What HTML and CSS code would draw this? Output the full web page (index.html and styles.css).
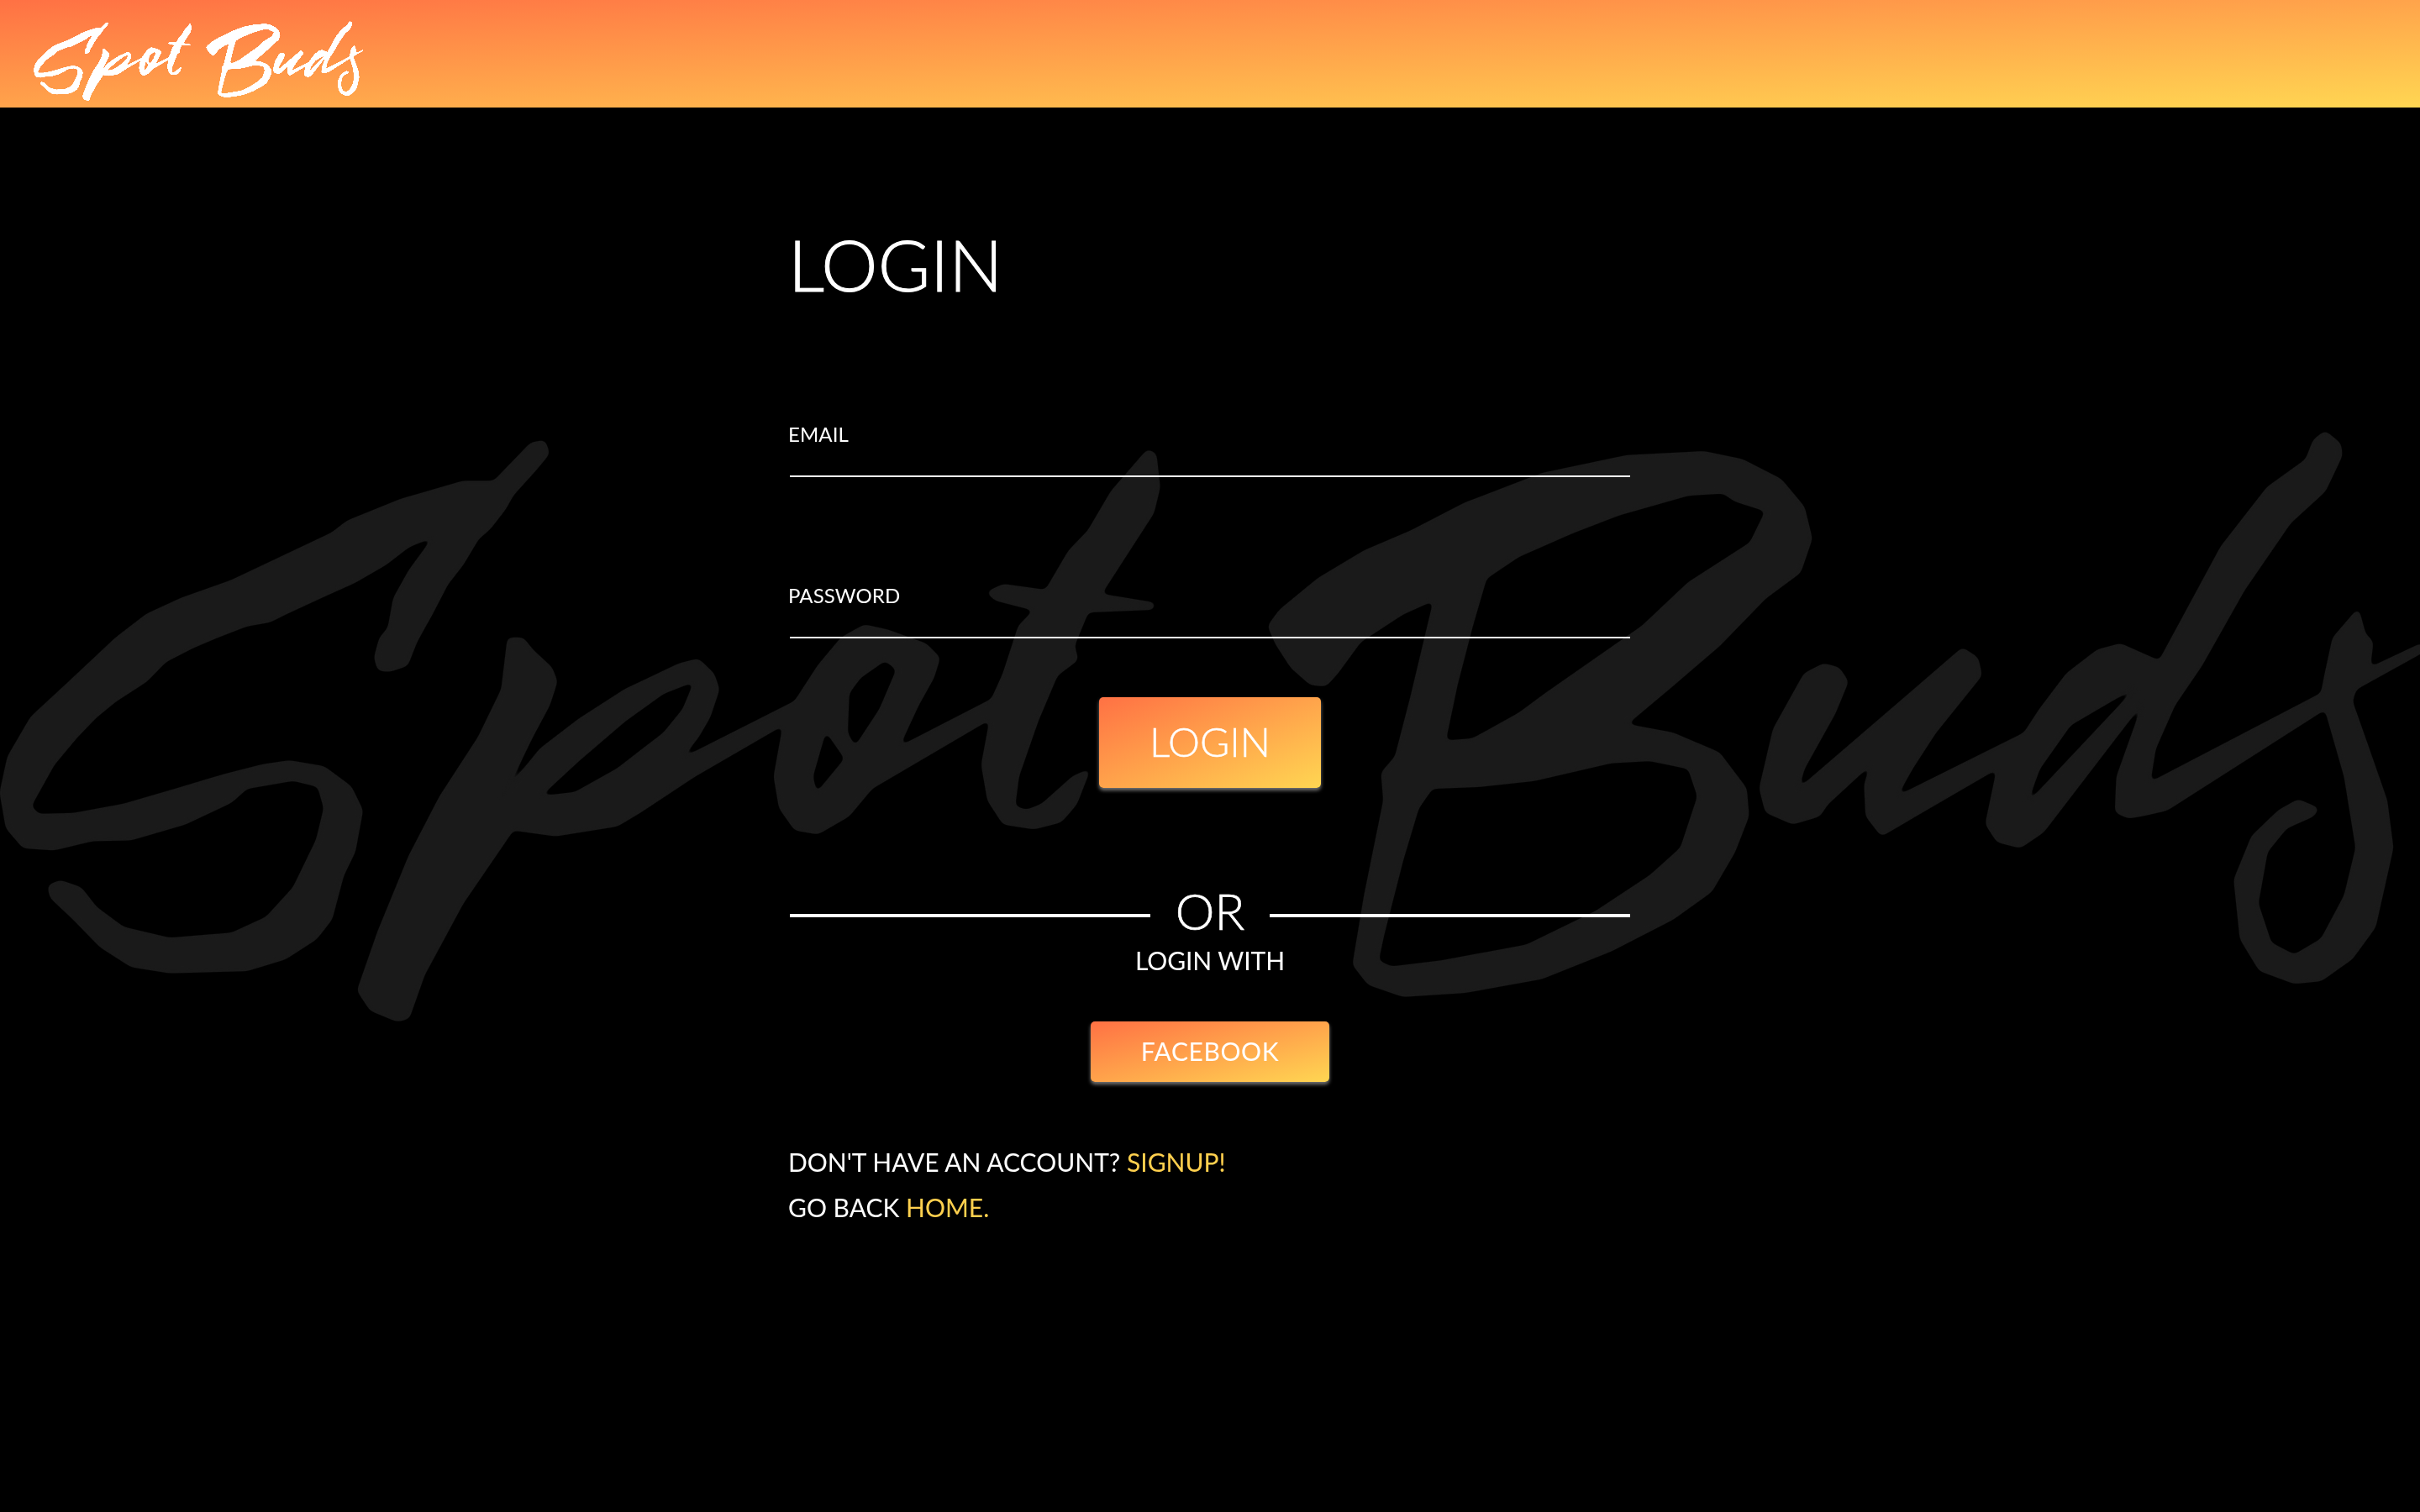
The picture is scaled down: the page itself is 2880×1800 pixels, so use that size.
FILE: index.html
```html
<!DOCTYPE html>
<html lang="en">
<head>
<meta charset="utf-8">
<title>Spot Buds - Login</title>
<link rel="stylesheet" href="styles.css">
</head>
<body>
<svg class="defs" width="0" height="0" aria-hidden="true">
  <defs>
    <filter id="smooth" x="-2%" y="-2%" width="104%" height="104%" color-interpolation-filters="sRGB">
      <feGaussianBlur stdDeviation="4 8"/>
      <feComponentTransfer><feFuncA type="linear" slope="8" intercept="-3"/></feComponentTransfer>
    </filter>
    <symbol id="logo" viewBox="0 28 3136 1490" preserveAspectRatio="none">
      <g filter="url(#smooth)" fill="currentColor" fill-rule="evenodd">
        <path d="M688 58L706 52L712 85L695 125L665 190L655 225L635 275L620 300L600 365L580 415L560 490L540 560L528 620L505 635L490 632L485 600L492 550L503 525L510 450L530 380L562 295L530 320L500 365L460 410L420 445L370 490L350 510L320 520L280 550L250 575L215 610L190 660L150 710L125 750L100 800L70 870L40 975L50 995L95 993L160 970L230 930L290 895L340 870L375 860L420 875L455 925L470 985L460 1090L445 1150L430 1260L410 1310L370 1360L320 1390L220 1395L170 1380L130 1330L95 1260L65 1205L62 1175L78 1162L105 1180L125 1230L160 1280L220 1308L300 1295L345 1255L380 1180L410 1060L420 980L412 925L380 910L320 930L300 965L240 1020L170 1060L120 1062L70 1085L30 1080L8 1030L0 940L10 850L40 750L90 660L150 550L190 490L235 450L300 405L430 285L450 255L520 200L600 155L640 155Z"/>
        <path d="M658 550L678 550L690 580L715 625L722 660L712 720L690 800L670 880L648 955L700 830L750 755L810 680L880 615L905 603L925 640L932 680L920 750L905 800L883 855L1030 710L1060 620L1090 550L1120 517L1150 530L1200 565L1218 600L1210 650L1190 720L1165 825L1285 705L1300 640L1320 520L1340 480L1290 455L1278 435L1300 415L1355 430L1385 330L1410 280L1440 180L1487 75L1498 85L1503 170L1495 235L1460 340L1427 440L1497 462L1495 478L1410 485L1392 570L1397 605L1370 645L1345 760L1320 900L1315 975L1330 985L1350 970L1390 900L1413 880L1395 970L1375 1015L1340 1032L1300 1020L1280 960L1272 870L1283 755L1130 930L1100 1000L1060 1045L1030 1035L1010 980L1003 900L1015 770L900 900L830 990L800 1025L720 1050L665 1035L600 1220L550 1400L530 1510L515 1518L480 1490L463 1440L490 1290L530 1100L570 950L620 800L650 680ZM900 660L860 690L810 760L750 860L700 950L745 940L800 880L860 790L885 730ZM1147 607L1162 630L1140 730L1108 825L1098 790L1100 690L1115 650ZM1070 785L1095 855L1058 942L1053 900Z"/>
        <g transform="translate(1568 0)">
          <path d="M75 520L90 480L140 400L200 330L260 280L330 210L430 135L540 90L640 80L690 100L740 150L770 220L780 300L765 385L720 450L660 570L600 670L540 768L600 790L660 840L695 930L698 1000L680 1090L650 1190L600 1260L520 1340L430 1410L330 1445L250 1455L205 1425L185 1375L200 1200L225 960L222 890L240 850L260 700L290 455L250 490L195 560L165 640L150 672L130 668L105 625L85 565ZM358 400L340 520L320 670L305 810L340 805L400 740L435 690L560 520L620 410L700 310L720 230L680 205L665 185L620 190L530 240L470 285L400 345ZM288 930L350 925L420 910L520 865L570 860L620 880L632 950L610 1080L570 1150L500 1240L410 1325L300 1365L235 1380L218 1365L225 1300L250 1110L270 980Z"/>
          <path d="M795 615L815 625L827 660L810 740L770 880L762 932L975 575L995 600L1000 645L940 790L910 880L890 950L1055 790L1075 730L1110 640L1150 580L1180 565L1230 608L1260 500L1310 320L1370 170L1420 100L1430 50L1445 28L1465 60L1467 90L1445 180L1400 260L1340 430L1285 620L1250 720L1225 830L1218 915L1440 690L1445 640L1455 550L1488 475L1497 540L1507 560L1503 625L1572 562L1572 586L1485 680L1480 710L1500 820L1525 960L1533 1080L1510 1280L1480 1360L1440 1415L1405 1422L1360 1390L1335 1310L1327 1160L1350 1050L1385 985L1410 958L1437 980L1430 1000L1395 1030L1370 1090L1358 1220L1375 1320L1405 1350L1440 1310L1470 1200L1485 1080L1470 900L1445 730L1240 985L1210 998L1190 1005L1173 990L1175 900L1210 710L1080 1040L1050 1080L1020 1065L1005 1020L1020 880L870 1050L850 1000L848 920L857 868L800 970L790 1000L755 1020L720 990L712 930L730 780L770 640ZM1203 670L1115 770L1075 880L1058 970Z"/>
        </g>
      </g>
    </symbol>
  </defs>
</svg>

<header class="topbar">
  <svg class="brand" role="img" aria-label="Spot Buds"><use href="#logo"/></svg>
</header>

<svg class="watermark" aria-hidden="true"><use href="#logo"/></svg>

<main class="panel">
  <h1 class="title">LOGIN</h1>
  <form class="form">
    <label class="field">
      <span class="field-label">EMAIL</span>
      <input class="field-input" type="email">
    </label>
    <label class="field">
      <span class="field-label">PASSWORD</span>
      <input class="field-input" type="password">
    </label>
    <button class="btn btn-login" type="button">LOGIN</button>
  </form>
  <div class="divider"><span class="divider-text">OR</span></div>
  <p class="login-with">LOGIN WITH</p>
  <button class="btn btn-facebook" type="button">FACEBOOK</button>
  <div class="links">
    <p class="link-row">DON'T HAVE AN ACCOUNT? <a class="link" href="#">SIGNUP!</a></p>
    <p class="link-row">GO BACK <a class="link" href="#">HOME.</a></p>
  </div>
</main>
</body>
</html>
```

FILE: styles.css
```css
* { box-sizing: border-box; }
html, body { margin: 0; height: 100%; }
body {
  position: relative;
  height: 1800px;
  overflow: hidden;
  background: #000;
  color: #fff;
  font-family: "Lato", "Open Sans", sans-serif;
}
.defs { position: absolute; }
.topbar {
  height: 128px;
  padding: 25px 0 0 40px;
  background: linear-gradient(to bottom right, #ff7144, #ffd652);
}
.brand { display: block; width: 392px; height: 95px; color: #fff; }
.watermark {
  position: absolute;
  left: 0;
  top: 513px;
  width: 2880px;
  height: 703px;
  color: #1a1a1a;
}
.panel {
  position: relative;
  width: 1000px;
  margin: 0 auto;
  display: flex;
  flex-direction: column;
}
.title {
  margin: 136px 0 0 -2px;
  font-size: 85px;
  line-height: 100px;
  font-weight: 300;
  -webkit-text-stroke: 1px #fff;
}
.form { display: flex; flex-direction: column; align-items: center; }
.field { display: block; width: 100%; height: 88px; margin-top: 116px; padding-top: 22px; }
.field + .field { margin-top: 104px; }
.field-label { display: block; margin-left: -2px; font-size: 24px; line-height: 30px; letter-spacing: .1px; }
.field-input {
  display: block;
  width: 100%;
  height: 36px;
  padding: 0;
  background: transparent;
  border: 0;
  border-bottom: 2px solid #fff;
  outline: 0;
}
.btn {
  border: 0;
  border-radius: 5px;
  color: #fff;
  background: linear-gradient(to bottom right, #ff7144, #ffd652);
  box-shadow: 0 3px 4px rgba(255, 255, 255, .45);
  font-family: inherit;
  padding: 0;
}
.btn-login { width: 264px; height: 108px; margin-top: 70px; padding-bottom: 3px; font-size: 48px; font-weight: 300; -webkit-text-stroke: .5px #fff; }
.divider {
  display: flex;
  align-items: center;
  gap: 30px;
  margin-top: 118px;
  height: 68px;
}
.divider::before, .divider::after { content: ""; flex: 1; height: 4px; background: #fff; }
.divider-text { margin-bottom: 10px; font-size: 59px; line-height: 68px; font-weight: 300; -webkit-text-stroke: .6px #fff; }
.login-with { margin: -1px 0 0; text-align: center; font-size: 30px; line-height: 40px; letter-spacing: -.1px; }
.btn-facebook { align-self: center; width: 284px; height: 72px; margin-top: 53px; padding-bottom: 2px; font-size: 30px; letter-spacing: .6px; }
.links { margin: 68px 0 0 -2px; }
.link-row { margin: 0; font-size: 30px; line-height: 54px; }
.link { color: #ffd04e; text-decoration: none; }
```
